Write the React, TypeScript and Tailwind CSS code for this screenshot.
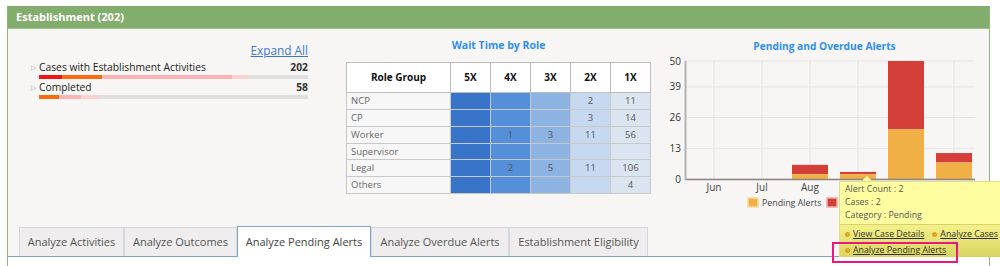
import React from 'react';

const ROWS = [
  { role: 'NCP', v: ['', '', '', '2', '11'] },
  { role: 'CP', v: ['', '', '', '3', '14'] },
  { role: 'Worker', v: ['', '1', '3', '11', '56'] },
  { role: 'Supervisor', v: ['', '', '', '', ''] },
  { role: 'Legal', v: ['', '2', '5', '11', '106'] },
  { role: 'Others', v: ['', '', '', '', '4'] },
];
const ROW_H = ['h-[17px]', 'h-[17px]', 'h-[17px]', 'h-[16px]', 'h-[17px]', 'h-[17px]'];
const COL_BG = ['bg-[#3875c9]', 'bg-[#548fd7]', 'bg-[#8cb3e2]', 'bg-[#c6d9f1]', 'bg-[#dbe5f1]'];

const MONTHS = [
  { m: 'Jun', p: 0, o: 0 },
  { m: 'Jul', p: 0, o: 0 },
  { m: 'Aug', p: 2, o: 4 },
  { m: 'Sep', p: 2, o: 1 },
  { m: 'Oct', p: 21, o: 29 },
  { m: 'Nov', p: 7, o: 4 },
];

function ProgressRow({ label, value, segs }: { label: string; value: string; segs: [string, number][] }) {
  return (
    <div className="mb-[2px]">
      <div className="relative flex items-center h-[14px] text-[10.3px] text-[#222]">
        <span className="absolute -left-[8px] top-[3px] text-[7px] text-[#999] leading-none">▷</span>
        <span className="flex-1">{label}</span>
        <span className="font-bold text-[#333]">{value}</span>
      </div>
      <div className="flex h-[4px] bg-[#dfdfdf]">
        {segs.map(([c, w], i) => (
          <div key={i} className={c} style={{ width: w }} />
        ))}
      </div>
    </div>
  );
}

function Chart() {
  const y = (v: number) => 126 - v * 2.36;
  const ticks = [0, 13, 26, 39, 50];
  return (
    <svg width="329" height="174" className="block">
      {ticks.map((t) => (
        <g key={t}>
          <line x1="25" x2="315" y1={y(t)} y2={y(t)} stroke="#e6e4e2" />
          <text x="21" y={y(t) + 3.5} fontSize="10" fill="#333" textAnchor="end">{t}</text>
        </g>
      ))}
      {MONTHS.map((d, i) => (
        <line key={d.m} x1={54 + 48 * i} x2={54 + 48 * i} y1={y(50)} y2={y(0)} stroke="#e6e4e2" />
      ))}
      {MONTHS.map((d, i) => {
        const x = 36 + 48 * i;
        return (
          <g key={d.m}>
            {d.o + d.p > 0 && (
              <>
                <rect x={x} y={y(d.p + d.o)} width="36" height={d.o * 2.36} fill="#d43f3a" />
                <rect x={x} y={y(d.p)} width="36" height={d.p * 2.36} fill="#f0b046" />
              </>
            )}
            <text x={54 + 48 * i} y="138" fontSize="10" fill="#444" textAnchor="middle">{d.m}</text>
          </g>
        );
      })}
      <line x1="25" x2="315" y1="126.5" y2="126.5" stroke="#8c8282" strokeWidth="1.5" />
      <line x1="25.5" x2="25.5" y1="8" y2="127" stroke="#b4b4b4" strokeWidth="2" />
      <rect x="88" y="145" width="10" height="9" fill="#f0b046" stroke="#f7d999" strokeWidth="1.5" />
      <text x="102" y="153" fontSize="8.8" fill="#444">Pending Alerts</text>
      <rect x="167" y="145" width="10" height="9" fill="#d43f3a" stroke="#eaa" strokeWidth="1.5" />
      <text x="181" y="153" fontSize="8.8" fill="#444">Overdue Alerts</text>
    </svg>
  );
}

const TABS: [string, string][] = [
  ['Analyze Activities', 'w-[105px]'],
  ['Analyze Outcomes', 'w-[113px]'],
  ['Analyze Pending Alerts', 'w-[134px]'],
  ['Analyze Overdue Alerts', 'w-[138px]'],
  ['Establishment Eligibility', 'w-[139px]'],
];

export default function App() {
  return (
    <div className="relative w-[1000px] h-[266px] overflow-hidden bg-white pt-[6px] pl-[7px] font-['Open_Sans',sans-serif]">
      <div className="w-[983px] border-x border-[#8cb879]">
        <div className="h-[23px] bg-[#83ad6d] border-b border-[#9cc48a] pl-[8px] flex items-center text-white font-bold text-[11px]">
          Establishment (202)
        </div>
        <div className="bg-[#f8f6f4]">
          <div className="flex h-[198px]">
            <div className="w-[338px] pl-[31px] pt-[14px]">
              <div className="w-[269px]">
                <div className="flex justify-end h-[16px] items-center text-[11.8px] text-[#3a76d8] underline mb-[2px]">
                  Expand All
                </div>
                <ProgressRow
                  label="Cases with Establishment Activities"
                  value="202"
                  segs={[
                    ['bg-[#f01414]', 23],
                    ['bg-[#fb6a12]', 40],
                    ['bg-[#fbb4b6]', 130],
                    ['bg-[#fcd0d0]', 16],
                  ]}
                />
                <ProgressRow
                  label="Completed"
                  value="58"
                  segs={[
                    ['bg-[#fb6a12]', 20],
                    ['bg-[#fbb4b6]', 22],
                    ['bg-[#fcd0d0]', 18],
                  ]}
                />
              </div>
            </div>
            <div className="w-[314px] pt-[9px]">
              <div className="w-[305px] text-center text-[10.5px] font-bold text-[#2e8ff0] h-[14px] leading-[14px] mb-[10px]">
                Wait Time by Role
              </div>
              <table className="w-[305px] table-fixed border-collapse border border-[#a8a8a8] text-[9.5px]">
                <thead>
                  <tr className="h-[30px] bg-white">
                    <th className="w-[104px] border border-[#bdbdbd] font-bold text-[10px] text-[#111]">Role Group</th>
                    {['5X', '4X', '3X', '2X', '1X'].map((h) => (
                      <th key={h} className="border border-[#bdbdbd] font-bold text-[10px] text-[#111]">{h}</th>
                    ))}
                  </tr>
                </thead>
                <tbody>
                  {ROWS.map((r, ri) => (
                    <tr key={r.role} className={ROW_H[ri]}>
                      <td className="border border-[#c8c8c8] bg-[#f7f7f7] pl-[4px] text-[#666] leading-none">{r.role}</td>
                      {r.v.map((v, ci) => (
                        <td key={ci} className={`border border-[#c8c8c8] text-center text-[#555] leading-none ${COL_BG[ci]}`}>{v}</td>
                      ))}
                    </tr>
                  ))}
                </tbody>
              </table>
            </div>
            <div className="flex-1 pt-[10px]">
              <div className="text-center text-[10.2px] font-bold text-[#2e8ff0] h-[14px] leading-[14px]">
                Pending and Overdue Alerts
              </div>
              <Chart />
            </div>
          </div>
          <div className="flex items-end h-[30px] pl-[11px] border-b border-[#79a5c6]">
            {TABS.map(([t, w], i) =>
              i === 2 ? (
                <div key={t} className={`${w} h-[31px] -mb-px flex items-center justify-center whitespace-nowrap bg-white border border-b-0 border-[#79a5c6] text-[11px] text-[#444]`}>
                  {t}
                </div>
              ) : (
                <div key={t} className={`${w} h-[29px] flex items-center justify-center whitespace-nowrap bg-[#efeded] border border-b-0 border-[#d3d9df] text-[11px] text-[#555]`}>
                  {t}
                </div>
              )
            )}
          </div>
        </div>
        <div className="h-[20px] bg-white" />
      </div>

      <svg className="absolute left-[861px] top-[176px]" width="12" height="6">
        <path d="M0 6 L6 0 L12 6 Z" fill="#fdfca0" stroke="#e2dc8c" />
      </svg>
      <div className="absolute left-[839px] top-[181px] w-[170px] h-[76px] border border-[#e2dc8c] text-[8.8px] text-[#555] whitespace-nowrap">
        <div className="bg-[#fefda0] h-[43px] pl-[5px] pt-[1px] leading-[13px] border-b border-[#d6d06e]">
          <div>Alert Count : 2</div>
          <div>Cases : 2</div>
          <div>Category : Pending</div>
        </div>
        <div className="h-[32px] bg-gradient-to-b from-[#f5f18a] to-[#dbd462] pl-[5px] pt-[1px] leading-[16px]">
          <div className="flex items-center">
            <span className="w-[5px] h-[5px] rounded-full bg-[#e3a323] mr-[3px]" />
            <span className="underline text-[#333]">View Case Details</span>
            <span className="w-[5px] h-[5px] rounded-full bg-[#e3a323] ml-[8px] mr-[3px]" />
            <span className="underline text-[#333]">Analyze Cases</span>
          </div>
          <div className="flex items-center">
            <span className="w-[5px] h-[5px] rounded-full bg-[#e3a323] mr-[3px]" />
            <span className="underline text-[#333]">Analyze Pending Alerts</span>
          </div>
        </div>
      </div>
      <div className="absolute left-[832px] top-[242px] w-[126px] h-[21px] border-2 border-[#e8197d]" />
    </div>
  );
}
